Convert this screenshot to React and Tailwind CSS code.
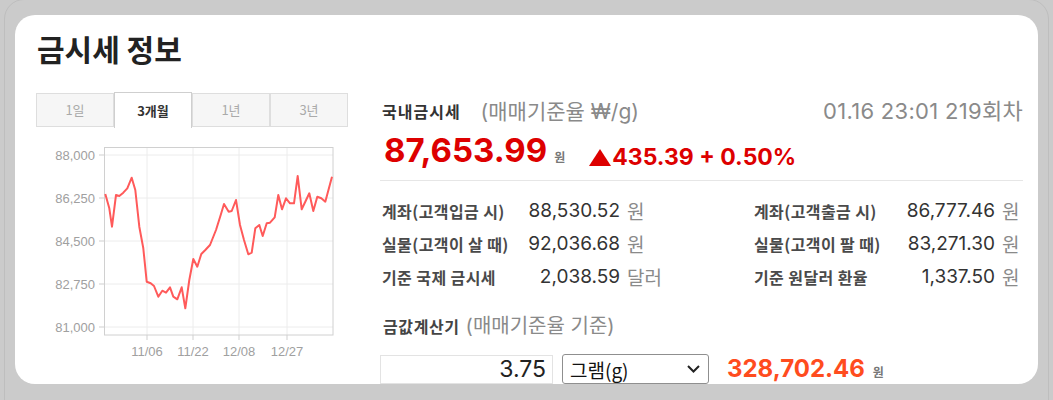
import React from "react";

const pts = [
  [105.3,194],[109.3,208.3],[112,226.7],[116,195],[119.3,196],[123.3,192.7],[127.3,188.3],[131.7,177.7],
  [135.3,190],[139.3,226.7],[143.3,248.3],[146.7,281.7],[150.7,283.3],[154,286],[158.3,296.7],[162.3,290.7],
  [166,292.7],[170,287.3],[173.3,296.7],[177.3,299.3],[181.7,287.3],[185.3,308.3],[189.3,280],[193.3,259],
  [197.3,266.7],[201.3,254],[205.3,250],[210,245],[216,230],[220.7,215],[224,204],[228.7,211.7],[231.7,211],
  [236,200],[240,225],[244,240],[248.3,254.3],[251.7,252.7],[255.3,228.3],[259.3,225],[262.7,236],[266.7,223.3],
  [270,222.7],[274.7,217.3],[278.3,195],[282,209.3],[286,198.3],[290,203.3],[294,203.3],[297.7,176],[301.7,209.3],
  [305.3,201.7],[309.3,193.3],[313.3,211],[317.3,196.7],[321.3,198.3],[325.3,201.7],[332,176.7]
];
const pathD = pts.map((p, i) => (i === 0 ? "M" : "L") + p[0] + "," + p[1]).join(" ");

const yLabels = [
  ["88,000", 155],
  ["86,250", 198],
  ["84,500", 241],
  ["82,750", 284],
  ["81,000", 327],
];
const xLabels = [
  ["11/06", 147],
  ["11/22", 193],
  ["12/08", 239],
  ["12/27", 287],
];

function Chart() {
  return (
    <svg
      width="312"
      height="228"
      viewBox="36 137 312 228"
      className="block font-['Liberation_Sans',Arial,sans-serif]"
    >
      {yLabels.map(([t, y]) => (
        <g key={t}>
          <line x1="104" x2="333" y1={y} y2={y} stroke="#ececec" strokeWidth="1" />
          <line x1="99" x2="104" y1={y} y2={y} stroke="#cfcfcf" strokeWidth="1" />
          <text x="95" y={y + 4.6} textAnchor="end" fontSize="13" fill="#a0a0a0">
            {t}
          </text>
        </g>
      ))}
      {xLabels.map(([t, x]) => (
        <g key={t}>
          <line x1={x} x2={x} y1="147" y2="335" stroke="#ececec" strokeWidth="1" />
          <line x1={x} x2={x} y1="335" y2="340" stroke="#cfcfcf" strokeWidth="1" />
          <text x={x} y="356" textAnchor="middle" fontSize="13" fill="#a0a0a0">
            {t}
          </text>
        </g>
      ))}
      <rect x="104.5" y="147.5" width="228.5" height="187.5" fill="none" stroke="#d0d0d0" strokeWidth="1" />
      <path d={pathD} fill="none" stroke="#ff5a5a" strokeWidth="2" strokeLinejoin="round" />
    </svg>
  );
}

function Tabs() {
  const tabs = ["1일", "3개월", "1년", "3년"];
  return (
    <div className="flex h-[35px] font-['Noto_Sans_CJK_KR',sans-serif] text-[13px]">
      {tabs.map((t) =>
        t === "3개월" ? (
          <div
            key={t}
            className="w-[78px] h-[36px] -mt-px flex items-center justify-center bg-white border-t border-x border-[#cfcfcf] text-[#333] font-bold"
          >
            {t}
          </div>
        ) : (
          <div
            key={t}
            className="w-[78px] h-[34px] flex items-center justify-center bg-[#f6f6f6] border border-[#dedede] text-[#aaaaaa]"
          >
            {t}
          </div>
        )
      )}
    </div>
  );
}

function Row({ label, value, unit, labelW, valueW, unitW }) {
  return (
    <div className="flex items-center h-[33px]">
      <div
        className="font-['Noto_Sans_CJK_KR',sans-serif] font-bold text-[16px] tracking-[0.4px] text-[#4a4a4a] leading-none pl-[2px] whitespace-nowrap"
        style={{ width: labelW }}
      >
        {label}
      </div>
      <div
        className="text-right font-['Inter','Noto_Sans_CJK_KR',sans-serif] text-[19px] text-[#333] leading-none"
        style={{ width: valueW }}
      >
        {value}
      </div>
      <div
        className="ml-[7px] font-['Noto_Sans_CJK_KR',sans-serif] text-[19px] text-[#8a8a8a] leading-none whitespace-nowrap"
        style={{ width: unitW }}
      >
        {unit}
      </div>
    </div>
  );
}

export default function App() {
  return (
    <div className="h-[400px] bg-[#cbcbcb] px-[4px] overflow-hidden">
      <div className="-mt-px border border-[#bebebe] rounded-[20px] px-[10px] pt-[15px] pb-[40px]">
        <div className="h-[369px] bg-white rounded-[20px] overflow-hidden pl-[21px] pr-[15px] pt-[15px]">
          <div className="h-[36px] flex items-center pl-[1px] font-['Noto_Sans_CJK_KR',sans-serif] font-bold text-[30px] text-[#222] leading-none">
            금시세 정보
          </div>
          <div className="mt-[27px] flex">
            {/* left column */}
            <div className="w-[312px] shrink-0">
              <Tabs />
              <div className="mt-[9px]">
                <Chart />
              </div>
            </div>
            {/* right column */}
            <div className="ml-[32px] flex-1">
              <div className="h-[36px] flex items-center justify-between">
                <div className="flex items-center">
                  <span className="pl-[2px] font-['Noto_Sans_CJK_KR',sans-serif] font-bold text-[16px] tracking-[1px] text-[#333] leading-none">
                    국내금시세
                  </span>
                  <span className="ml-[20px] font-['Inter','Noto_Sans_CJK_KR',sans-serif] text-[21px] text-[#8a8a8a] leading-none">
                    (매매기준율 ₩/g)
                  </span>
                </div>
                <span className="font-['Inter','Noto_Sans_CJK_KR',sans-serif] text-[22px] tracking-[0.3px] text-[#8a8a8a] leading-none">
                  01.16 23:01 219회차
                </span>
              </div>
              <div className="h-[42px] flex items-center">
                <span className="pl-[4px] font-['Inter',sans-serif] font-bold text-[33px] text-[#dd0000] leading-none">
                  87,653.99
                </span>
                <span className="ml-[7px] mt-[14px] font-['Noto_Sans_CJK_KR',sans-serif] font-bold text-[12px] text-[#777] leading-none">
                  원
                </span>
                <svg width="22" height="17" viewBox="0 0 22 17" className="ml-[24px] mt-[14px]">
                  <polygon points="11,0 22,17 0,17" fill="#dd0000" />
                </svg>
                <span className="ml-[1px] mt-[14px] font-['Inter',sans-serif] font-bold text-[23px] text-[#dd0000] leading-none whitespace-pre">
                  435.39 + 0.50%
                </span>
              </div>
              <div className="mt-[9px] border-t border-[#e6e6e6] pt-[13px] flex justify-between">
                <div>
                  <Row label="계좌(고객입금 시)" value="88,530.52" unit="원" labelW={130} valueW={110} unitW={33} />
                  <Row label="실물(고객이 살 때)" value="92,036.68" unit="원" labelW={130} valueW={110} unitW={33} />
                  <Row label="기준 국제 금시세" value="2,038.59" unit="달러" labelW={130} valueW={110} unitW={33} />
                </div>
                <div>
                  <Row label="계좌(고객출금 시)" value="86,777.46" unit="원" labelW={130} valueW={113} unitW={21} />
                  <Row label="실물(고객이 팔 때)" value="83,271.30" unit="원" labelW={130} valueW={113} unitW={21} />
                  <Row label="기준 원달러 환율" value="1,337.50" unit="원" labelW={130} valueW={113} unitW={21} />
                </div>
              </div>
              <div className="mt-[18px] h-[30px] flex items-center">
                <span className="pl-[3px] font-['Noto_Sans_CJK_KR',sans-serif] font-bold text-[16px] tracking-[0.6px] text-[#444] leading-none">
                  금값계산기
                </span>
                <span className="ml-[6px] font-['Inter','Noto_Sans_CJK_KR',sans-serif] text-[20px] text-[#8a8a8a] leading-none">
                  (매매기준율 기준)
                </span>
              </div>
              <div className="mt-[13px] flex items-center">
                <div className="w-[173px] h-[29px] border border-[#e3e3e3] flex items-center justify-end pr-[6px] font-['Inter',sans-serif] text-[23px] text-[#222] leading-none">
                  3.75
                </div>
                <div className="ml-[9px] w-[147px] h-[30px] border border-[#8f8f8f] rounded-[3px] flex items-center justify-between pl-[7px] pr-[8px]">
                  <span className="font-['Noto_Sans_CJK_KR',sans-serif] text-[19px] text-[#111] leading-none">
                    그램(g)
                  </span>
                  <svg width="13" height="8" viewBox="0 0 13 8">
                    <polyline points="1,1 6.5,6.5 12,1" fill="none" stroke="#222" strokeWidth="2" />
                  </svg>
                </div>
                <span className="ml-[18px] font-['Inter',sans-serif] font-bold text-[24px] text-[#ff4c1e] leading-none">
                  328,702.46
                </span>
                <span className="ml-[8px] mt-[6px] font-['Noto_Sans_CJK_KR',sans-serif] font-bold text-[12px] text-[#777] leading-none">
                  원
                </span>
              </div>
            </div>
          </div>
        </div>
      </div>
    </div>
  );
}
